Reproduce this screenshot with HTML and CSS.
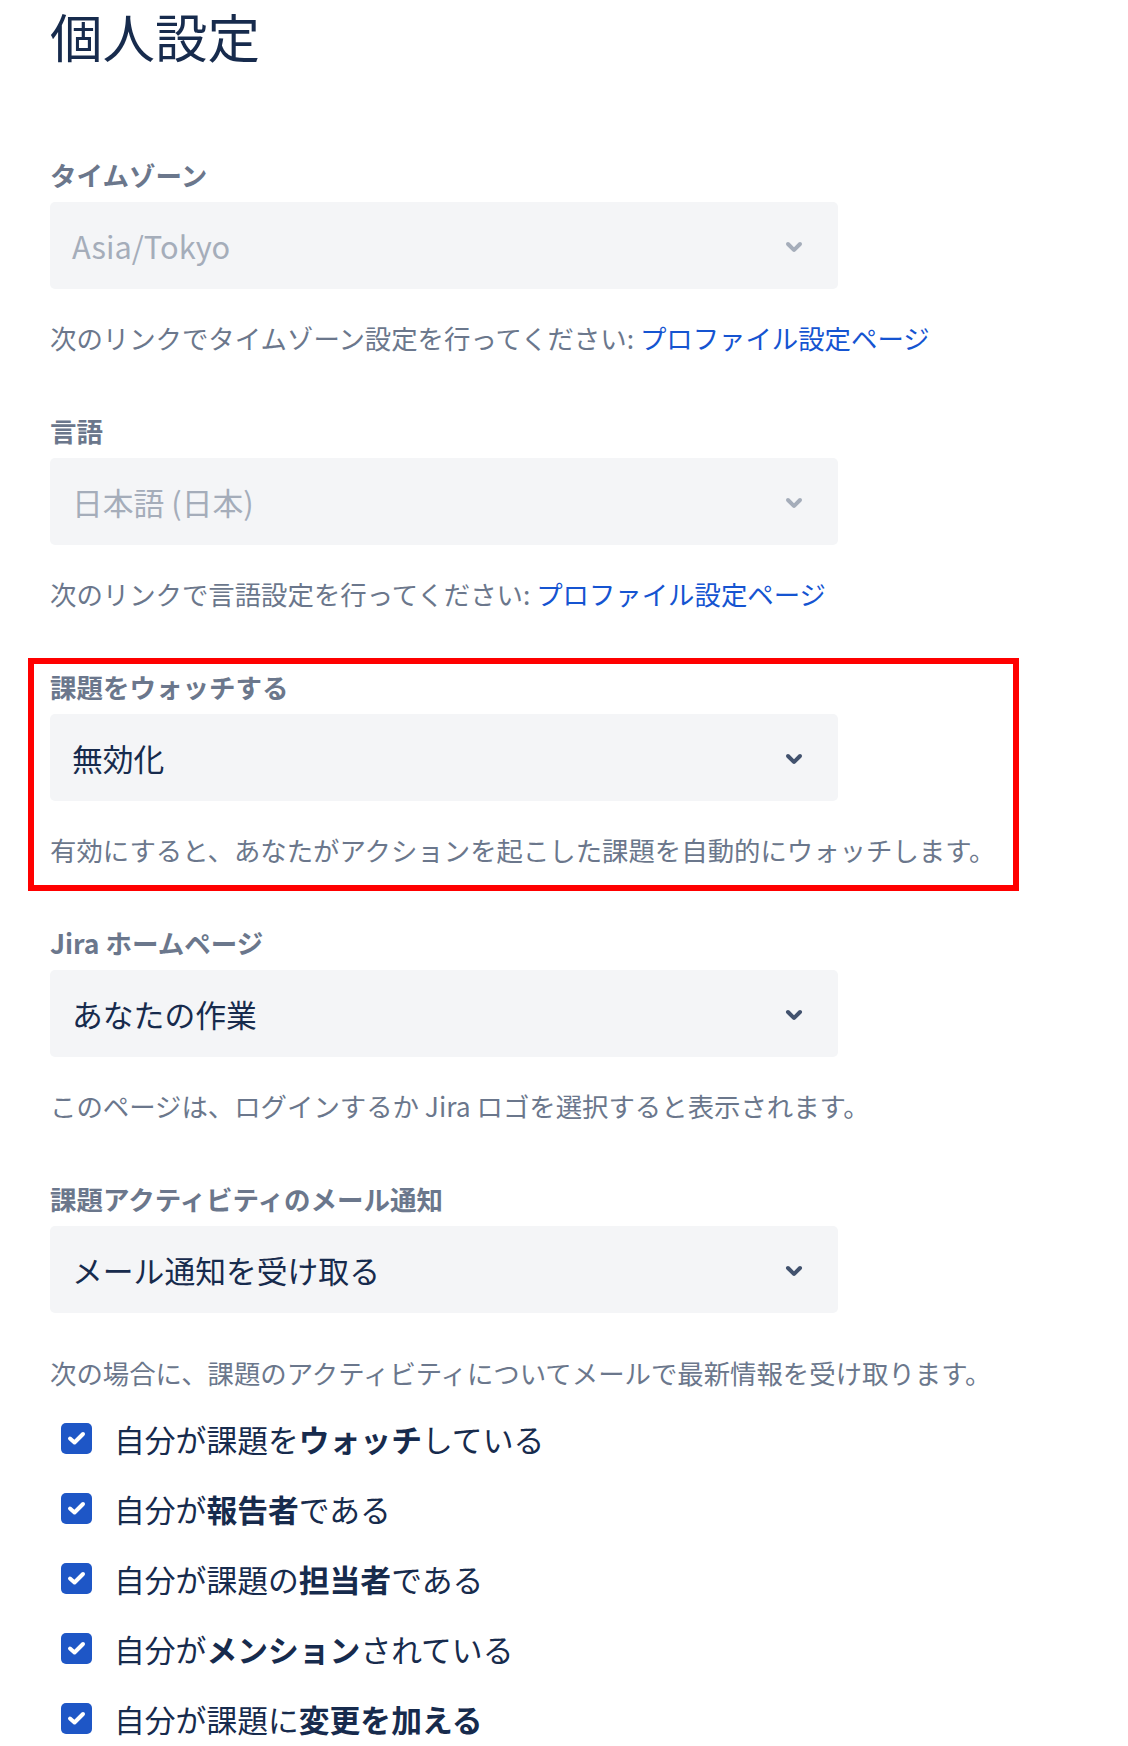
FILE: index.html
```html
<!DOCTYPE html>
<html lang="ja">
<head>
<meta charset="utf-8">
<title>個人設定</title>
<link rel="stylesheet" href="styles.css">
</head>
<body>
<main class="page">
  <h1 class="title">個人設定</h1>

  <section class="field">
    <div class="label">タイムゾーン</div>
    <div class="select is-disabled">
      <span class="value">Asia/Tokyo</span>
      <svg class="chevron" viewBox="0 0 24 24" width="48" height="48"><path d="M8.292 10.293a1.009 1.009 0 000 1.419l2.939 2.965c.218.215.5.322.779.322s.556-.107.769-.322l2.93-2.955a1.01 1.01 0 000-1.419.987.987 0 00-1.406 0l-2.298 2.317-2.307-2.327a.99.99 0 00-1.406 0z"/></svg>
    </div>
    <p class="help">次のリンクでタイムゾーン設定を行ってください: <a class="link" href="#">プロファイル設定ページ</a></p>
  </section>

  <section class="field">
    <div class="label">言語</div>
    <div class="select is-disabled">
      <span class="value">日本語 (日本)</span>
      <svg class="chevron" viewBox="0 0 24 24" width="48" height="48"><path d="M8.292 10.293a1.009 1.009 0 000 1.419l2.939 2.965c.218.215.5.322.779.322s.556-.107.769-.322l2.93-2.955a1.01 1.01 0 000-1.419.987.987 0 00-1.406 0l-2.298 2.317-2.307-2.327a.99.99 0 00-1.406 0z"/></svg>
    </div>
    <p class="help">次のリンクで言語設定を行ってください: <a class="link" href="#">プロファイル設定ページ</a></p>
  </section>

  <section class="field is-highlighted">
    <div class="label">課題をウォッチする</div>
    <div class="select">
      <span class="value">無効化</span>
      <svg class="chevron" viewBox="0 0 24 24" width="48" height="48"><path d="M8.292 10.293a1.009 1.009 0 000 1.419l2.939 2.965c.218.215.5.322.779.322s.556-.107.769-.322l2.93-2.955a1.01 1.01 0 000-1.419.987.987 0 00-1.406 0l-2.298 2.317-2.307-2.327a.99.99 0 00-1.406 0z"/></svg>
    </div>
    <p class="help">有効にすると、あなたがアクションを起こした課題を自動的にウォッチします。</p>
  </section>

  <section class="field">
    <div class="label">Jira ホームページ</div>
    <div class="select">
      <span class="value">あなたの作業</span>
      <svg class="chevron" viewBox="0 0 24 24" width="48" height="48"><path d="M8.292 10.293a1.009 1.009 0 000 1.419l2.939 2.965c.218.215.5.322.779.322s.556-.107.769-.322l2.93-2.955a1.01 1.01 0 000-1.419.987.987 0 00-1.406 0l-2.298 2.317-2.307-2.327a.99.99 0 00-1.406 0z"/></svg>
    </div>
    <p class="help">このページは、ログインするか Jira ロゴを選択すると表示されます。</p>
  </section>

  <section class="field is-last">
    <div class="label">課題アクティビティのメール通知</div>
    <div class="select">
      <span class="value">メール通知を受け取る</span>
      <svg class="chevron" viewBox="0 0 24 24" width="48" height="48"><path d="M8.292 10.293a1.009 1.009 0 000 1.419l2.939 2.965c.218.215.5.322.779.322s.556-.107.769-.322l2.93-2.955a1.01 1.01 0 000-1.419.987.987 0 00-1.406 0l-2.298 2.317-2.307-2.327a.99.99 0 00-1.406 0z"/></svg>
    </div>
    <p class="help">次の場合に、課題のアクティビティについてメールで最新情報を受け取ります。</p>
  </section>

  <ul class="checks">
    <li class="check-row">
      <svg class="checkbox" viewBox="0 0 31 31" width="31" height="31"><rect width="31" height="31" rx="5"/><polyline points="9,15.5 13.5,19.5 22,11"/></svg>
      <span class="check-label">自分が課題を<b>ウォッチ</b>している</span>
    </li>
    <li class="check-row">
      <svg class="checkbox" viewBox="0 0 31 31" width="31" height="31"><rect width="31" height="31" rx="5"/><polyline points="9,15.5 13.5,19.5 22,11"/></svg>
      <span class="check-label">自分が<b>報告者</b>である</span>
    </li>
    <li class="check-row">
      <svg class="checkbox" viewBox="0 0 31 31" width="31" height="31"><rect width="31" height="31" rx="5"/><polyline points="9,15.5 13.5,19.5 22,11"/></svg>
      <span class="check-label">自分が課題の<b>担当者</b>である</span>
    </li>
    <li class="check-row">
      <svg class="checkbox" viewBox="0 0 31 31" width="31" height="31"><rect width="31" height="31" rx="5"/><polyline points="9,15.5 13.5,19.5 22,11"/></svg>
      <span class="check-label">自分が<b>メンション</b>されている</span>
    </li>
    <li class="check-row">
      <svg class="checkbox" viewBox="0 0 31 31" width="31" height="31"><rect width="31" height="31" rx="5"/><polyline points="9,15.5 13.5,19.5 22,11"/></svg>
      <span class="check-label">自分が課題に<b>変更を加える</b></span>
    </li>
  </ul>
</main>
</body>
</html>
```

FILE: styles.css
```css
html, body {
  margin: 0;
  padding: 0;
  background: #ffffff;
}

body {
  font-family: "Noto Sans CJK JP", "Noto Sans", sans-serif;
  color: #172B4D;
}

.page {
  padding: 0 0 0 50px;
}

.title {
  margin: 4px 0 0;
  font-size: 52.5px;
  line-height: 62px;
  font-weight: 400;
  color: #172B4D;
}

.field {
  position: relative;
  width: 788px;
  margin: 0 0 57px;
}

.title + .field {
  margin-top: 91px;
}

.label {
  font-size: 26.5px;
  line-height: 36px;
  font-weight: 700;
  color: #6B778C;
}

.select {
  margin-top: 9px;
  height: 87px;
  box-sizing: border-box;
  display: flex;
  align-items: center;
  justify-content: space-between;
  padding: 0 20px 0 22px;
  background: #F4F5F7;
  border-radius: 5px;
}

.value {
  font-size: 30.8px;
  line-height: 40px;
  color: #172B4D;
}

.chevron {
  display: block;
  fill: #42526E;
}

.is-disabled .value {
  color: #A5ADBA;
}

.is-disabled .chevron {
  fill: #A5ADBA;
}

.help {
  margin: 31px 0 0;
  font-size: 26.4px;
  line-height: 36px;
  color: #6B778C;
  white-space: nowrap;
}

.field.is-last {
  margin-bottom: 0;
}

.is-last .help {
  margin-top: 42px;
}

.link {
  color: #1554D1;
  text-decoration: none;
}

.is-highlighted::after {
  content: "";
  position: absolute;
  top: -11px;
  left: -22px;
  width: 991px;
  height: 233px;
  box-sizing: border-box;
  border: 6px solid #FF0000;
  pointer-events: none;
}

.checks {
  list-style: none;
  margin: 12.5px 0 0;
  padding: 0 0 0 11px;
}

.check-row {
  display: flex;
  align-items: center;
  gap: 22px;
  height: 70px;
}

.checkbox {
  flex: none;
  display: block;
}

.checkbox rect {
  fill: #1E56C6;
}

.checkbox polyline {
  fill: none;
  stroke: #ffffff;
  stroke-width: 4;
  stroke-linecap: round;
  stroke-linejoin: round;
}

.check-label {
  font-size: 30.8px;
  line-height: 40px;
  color: #172B4D;
}

.check-label b {
  font-weight: 700;
}
```
